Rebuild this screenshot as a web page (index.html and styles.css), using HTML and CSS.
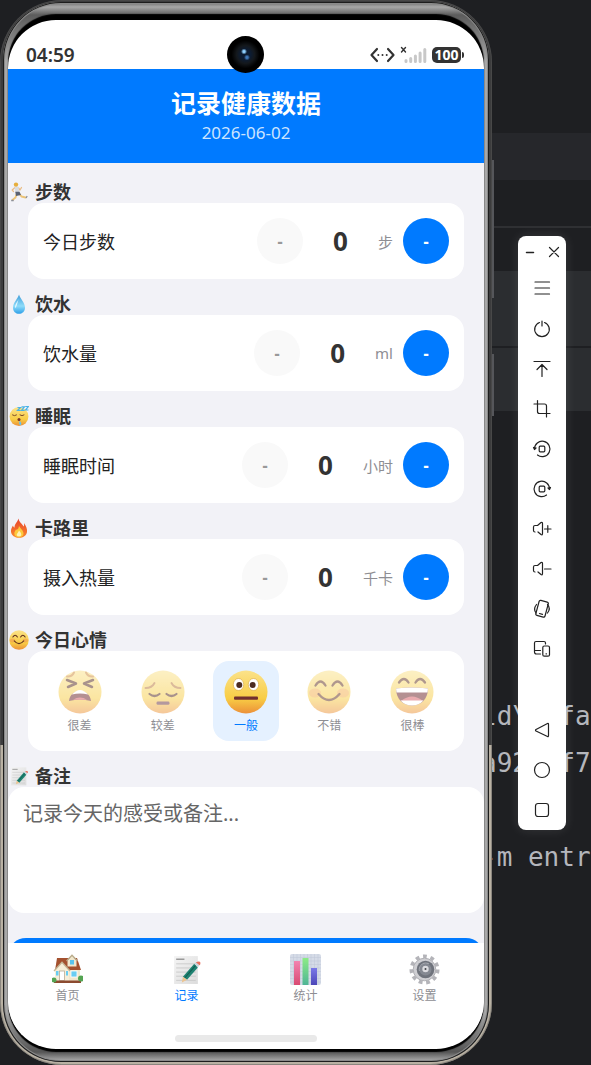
FILE: index.html
```html
<!DOCTYPE html>
<html lang="zh-CN">
<head>
    <meta charset="UTF-8">
    <meta name="viewport" content="width=device-width, initial-scale=1.0">
    <title>记录健康数据</title>
    <link rel="stylesheet" href="styles.css">
</head>
<body>
    <!-- Shared icons -->
    <svg class="sprite" aria-hidden="true">
        <defs>
            <linearGradient id="gFace" x1="0" y1="0" x2="0" y2="1">
                <stop offset="0" stop-color="#fbe28a"/>
                <stop offset="0.65" stop-color="#f8cd45"/>
                <stop offset="1" stop-color="#ec9038"/>
            </linearGradient>
            <linearGradient id="gDrop" x1="0" y1="0" x2="0" y2="1">
                <stop offset="0" stop-color="#3d9bd8"/>
                <stop offset="0.6" stop-color="#8fdcfa"/>
                <stop offset="1" stop-color="#2d9fe8"/>
            </linearGradient>
            <linearGradient id="gFire" x1="0" y1="0" x2="0" y2="1">
                <stop offset="0" stop-color="#e8432c"/>
                <stop offset="1" stop-color="#f98a2c"/>
            </linearGradient>
            <linearGradient id="gPink" x1="0" y1="0" x2="0" y2="1">
                <stop offset="0" stop-color="#f283b0"/>
                <stop offset="1" stop-color="#d94a72"/>
            </linearGradient>
            <linearGradient id="gGreen" x1="0" y1="0" x2="0" y2="1">
                <stop offset="0" stop-color="#8cec86"/>
                <stop offset="1" stop-color="#4fb596"/>
            </linearGradient>
            <linearGradient id="gViolet" x1="0" y1="0" x2="0" y2="1">
                <stop offset="0" stop-color="#7a79e8"/>
                <stop offset="1" stop-color="#4c46b8"/>
            </linearGradient>
            <linearGradient id="gPaper" x1="0" y1="0" x2="1" y2="1">
                <stop offset="0" stop-color="#f4f4f4"/>
                <stop offset="1" stop-color="#dcdcdc"/>
            </linearGradient>
        </defs>
        <symbol id="e-run" viewBox="0 0 20 20">
            <g fill="none" stroke-linecap="round" stroke-linejoin="round">
                <path d="M6 5.500 L3.200 8 L4.500 9.500" stroke="#e9bd86" stroke-width="1.300"/>
                <path d="M7.500 12.500 L6.500 15.500 L3.500 18" stroke="#ecc478" stroke-width="1.900"/>
                <path d="M10.500 12 L12.500 14.500 L16.500 15.500" stroke="#ecc478" stroke-width="1.900"/>
                <path d="M9.500 6 L11 8 L12.500 5.500" stroke="#e9bd86" stroke-width="1.300"/>
            </g>
            <path d="M5.500 4.800 L9.500 4.800 L10.500 10.500 L6.500 10.500 Z" fill="#d9dce3"/>
            <path d="M6.300 9.800 L10.500 9.800 L12 13 L7 14 Z" fill="#5a6172"/>
            <circle cx="7" cy="2.600" r="2.200" fill="#e7ae3c"/>
            <path d="M2.200 18.500 h2.500 M17 16 l1.200 -1.800" stroke="#8b8f99" stroke-width="1.300"/>
        </symbol>
        <symbol id="e-drop" viewBox="0 0 20 20">
            <path d="M10 0.500 C9 4.500 4 8.500 4 13.500 C4 17.500 6.700 19.800 10 19.800 C13.300 19.800 16 17.500 16 13.500 C16 8.500 11 4.500 10 0.500 Z" fill="url(#gDrop)"/>
            <path d="M10 3.500 C9.500 7 6 9.500 6 13.500 C7 15 8 11 10 3.500 Z" fill="#e2f7ff"/>
        </symbol>
        <symbol id="e-sleep" viewBox="0 0 20 20">
            <circle cx="10" cy="10.500" r="9.400" fill="url(#gFace)"/>
            <g fill="none" stroke="#7a4a28" stroke-width="1" stroke-linecap="round">
                <path d="M3.500 9 Q5.500 10.500 7.500 9"/>
                <path d="M11 9 Q13 10.500 15 9"/>
            </g>
            <circle cx="10" cy="13.500" r="1.500" fill="#7b3528"/>
            <path d="M10.500 15 Q13.500 17 11.500 19.500 Q9.500 18.500 10.500 15 Z" fill="#63c5f4"/>
            <path d="M8.500 1.500 h3 l-3 3 h3 M12.500 0.800 h3 l-3 3.500 h3 M16.500 0.500 h3 l-3 3.500 h3" fill="none" stroke="#4bb3e6" stroke-width="1.200"/>
        </symbol>
        <symbol id="e-fire" viewBox="0 0 20 20">
            <path d="M9.500 0.500 C10 4 13.500 6 14.500 8.500 C15.500 7.500 15 6 15 5 C17 8 18.500 11 18 14 C17.500 17.800 14 19.800 10 19.800 C6 19.800 2.300 17.500 2 13.500 C1.800 11 3 9 4 7.500 C4.300 9 5 9.500 5.500 9.500 C5.500 6 8.500 4 9.500 0.500 Z" fill="url(#gFire)"/>
            <path d="M10 7.500 C10.500 10 14.500 12 14.500 15.500 C14.500 18 12.500 19.300 10 19.300 C7.500 19.300 5.300 18 5.300 15.500 C5.300 13.500 6.500 12.500 7 11.500 C8.500 12.500 10 10 10 7.500 Z" fill="#fdc93c"/>
            <path d="M10 12.500 C11 14 12.500 15 12.300 17 C12 18.800 8 18.800 7.700 17 C7.600 15.500 9.500 14.500 10 12.500 Z" fill="#fff3b8"/>
        </symbol>
        <symbol id="e-awful" viewBox="0 0 44 44">
            <circle cx="22" cy="22" r="21.500" fill="url(#gFace)"/>
            <g fill="none" stroke-linecap="round" stroke-linejoin="round">
                <path d="M9 6.500 Q14 7 16 2.500 M35 6.500 Q30 7 28 2.500" stroke="#cf8a3c" stroke-width="2"/>
                <path d="M9 10 L18 13.500 L10 17 M35 10 L26 13.500 L34 17" stroke="#53281c" stroke-width="2.500"/>
            </g>
            <path d="M11 31 C12 18 32 18 33 31 Q22 28 11 31 Z" fill="#6b2328"/>
            <path d="M14 24.500 Q22 15.500 30 24.500 Q22 22.500 14 24.500 Z" fill="#fff"/>
            <path d="M15 29.800 Q22 25 29 29.800 Z" fill="#d65a62"/>
        </symbol>
        <symbol id="e-bad" viewBox="0 0 44 44">
            <circle cx="22" cy="22" r="21.500" fill="url(#gFace)"/>
            <g fill="none" stroke-linecap="round">
                <path d="M4.500 18 Q11 18 13.500 13 M39.500 18 Q33 18 30.500 13" stroke="#b97739" stroke-width="1.900"/>
                <path d="M8.500 24 Q13.500 28 18.500 24 M25.500 24 Q30.500 28 35.500 24" stroke="#53281c" stroke-width="2.200"/>
            </g>
            <rect x="15.500" y="31.500" width="13" height="3.300" rx="1.400" fill="#6b3440"/>
        </symbol>
        <symbol id="e-normal" viewBox="0 0 44 44">
            <circle cx="22" cy="22" r="21.500" fill="url(#gFace)"/>
            <ellipse cx="14.500" cy="14.500" rx="5.200" ry="6" fill="#fff" stroke="#d9a23a" stroke-width="0.600"/>
            <ellipse cx="29.500" cy="14.500" rx="5.200" ry="6" fill="#fff" stroke="#d9a23a" stroke-width="0.600"/>
            <circle cx="15.300" cy="15" r="3" fill="#4c2b20"/>
            <circle cx="28.700" cy="15" r="3" fill="#4c2b20"/>
            <rect x="10" y="26.500" width="24" height="3.200" rx="1" fill="#71302f"/>
        </symbol>
        <symbol id="e-good" viewBox="0 0 44 44">
            <circle cx="22" cy="22" r="21.500" fill="url(#gFace)"/>
            <ellipse cx="8" cy="23" rx="6" ry="4.500" fill="#f0874a" opacity="0.450"/>
            <ellipse cx="36" cy="23" rx="6" ry="4.500" fill="#f0874a" opacity="0.450"/>
            <g fill="none" stroke="#62321f" stroke-width="2.300" stroke-linecap="round">
                <path d="M8.500 15.500 Q13.500 7.500 18.500 15.500 M25.500 15.500 Q30.500 7.500 35.500 15.500"/>
                <path d="M11.500 24 Q22 36 32.500 24"/>
            </g>
        </symbol>
        <symbol id="e-great" viewBox="0 0 44 44">
            <circle cx="22" cy="22" r="21.500" fill="url(#gFace)"/>
            <path d="M9 12.500 Q14 5.500 18.500 12.500 M25.500 12.500 Q30 5.500 35 12.500" fill="none" stroke="#62321f" stroke-width="2.300" stroke-linecap="round"/>
            <path d="M6 18.500 Q22 16.500 38 18.500 C38 29 31 35.500 22 35.500 C13 35.500 6 29 6 18.500 Z" fill="#6b2328"/>
            <path d="M6 18.500 Q22 16.500 38 18.500 L37.500 22.500 H6.500 Z" fill="#fff"/>
            <path d="M11 31 Q22 22 33 31 Z" fill="#d65a62"/>
            <path d="M10.500 30.500 H33.500 Q29 35.500 22 35.500 Q15 35.500 10.500 30.500 Z" fill="#fff"/>
        </symbol>
        <symbol id="e-memo" viewBox="0 0 30 30">
            <rect x="3" y="2" width="23" height="27" fill="url(#gPaper)"/>
            <path d="M5 5 h8" stroke="#9a9a9a" stroke-width="1.400"/>
            <path d="M5 9.500 h19 M5 13.500 h19 M5 17.500 h19 M5 21.500 h19 M5 25.500 h19" stroke="#c6c6c6" stroke-width="0.800"/>
            <path d="M22.500 9.500 L26 13 L15.500 25 L11.500 22 Z" fill="#1f8271"/>
            <path d="M23.800 11 L13.500 23" stroke="#115c50" stroke-width="1"/>
            <path d="M11.500 22 L15.500 25 L10.500 27.500 Z" fill="#edc48f"/>
            <path d="M22.500 9.500 L24 8 L27.500 11 L26 13 Z" fill="#c9d5dc"/>
            <path d="M24 8 Q28 6.500 28.500 8.500 Q28.500 10.500 27.500 11 Z" fill="#e8705f"/>
        </symbol>
        <symbol id="e-house" viewBox="0 0 31 30">
            <path d="M4 15 H28 V27 H4 Z" fill="#f0e7cd"/>
            <path d="M5 3.500 H25 L29 15.500 H17 L10 8 L3 16 Z" fill="#a4512f"/>
            <path d="M15.500 6 L20 1 L24.500 6 V12 H15.500 Z" fill="#f0e7cd"/>
            <path d="M14.500 6.500 L20 0.800 L25.500 6.500" fill="none" stroke="#b9ab8b" stroke-width="1.300"/>
            <rect x="18" y="5.500" width="4" height="4.500" fill="#59c4ee"/>
            <path d="M3 16 L10 8.500 L17 16 V27 H3 Z" fill="#f6eed8"/>
            <path d="M2 16.500 L10 7.800 L18 16.500" fill="none" stroke="#c4b594" stroke-width="1.300"/>
            <rect x="7.500" y="16.500" width="5" height="9.500" fill="#fff" stroke="#b7ab95" stroke-width="0.800"/>
            <rect x="19" y="16.500" width="6" height="6" fill="#69cdf2" stroke="#fff" stroke-width="0.800"/>
            <rect x="4" y="16.500" width="2.500" height="4.500" fill="#69cdf2"/>
            <rect x="14" y="16.500" width="2" height="4.500" fill="#69cdf2"/>
            <rect x="2" y="26" width="27" height="2.500" fill="#8c4b30"/>
            <circle cx="2" cy="25.500" r="2.500" fill="#54a453"/>
            <circle cx="29" cy="24" r="3" fill="#54a453"/>
        </symbol>
        <symbol id="e-chart" viewBox="0 0 31 31">
            <rect width="31" height="31" rx="2" fill="#d5dbe7"/>
            <path d="M3.500 0 V31 M7 0 V31 M10.500 0 V31 M14 0 V31 M17.500 0 V31 M21 0 V31 M24.500 0 V31 M28 0 V31 M0 3.500 H31 M0 7 H31 M0 10.500 H31 M0 14 H31 M0 17.500 H31 M0 21 H31 M0 24.500 H31 M0 28 H31" stroke="#bfc7d6" stroke-width="0.500"/>
            <rect x="4" y="7" width="6" height="24" fill="url(#gPink)"/>
            <rect x="12.500" y="4" width="6" height="27" fill="url(#gGreen)"/>
            <rect x="21" y="14" width="6" height="17" fill="url(#gViolet)"/>
        </symbol>
        <symbol id="e-gear" viewBox="0 0 31 31">
            <circle cx="15.500" cy="15.500" r="13.200" fill="none" stroke="#b4b4b9" stroke-width="3.600" stroke-dasharray="3.800 3.740"/>
            <circle cx="15.500" cy="15.500" r="11.300" fill="#cfcfd3" stroke="#a3a3a8" stroke-width="0.800"/>
            <circle cx="16.500" cy="15.500" r="8.800" fill="#6f737c"/>
            <path d="M10.500 17 A6.500 6.500 0 0 1 20 10" fill="none" stroke="#a5a8af" stroke-width="1.200"/>
            <circle cx="16.500" cy="15.500" r="6" fill="#858992"/>
            <circle cx="16.500" cy="15" r="3.200" fill="#dcdce0"/>
            <circle cx="16.500" cy="15" r="1" fill="#44464c"/>
        </symbol>
    </svg>

    <!-- Terminal behind the device -->
    <pre class="terminal">ld\  fa
a92  f7

-m entr</pre>

    <div class="device">
        <div class="bezel">
            <div class="screen">
                <div class="status-bar">
                    <span class="clock">04:59</span>
                    <span class="camera"></span>
                    <div class="status-icons">
                        <svg width="25" height="16" viewBox="0 0 25 16" fill="none" stroke="#333" stroke-width="2.200" stroke-linecap="round" stroke-linejoin="round">
                            <path d="M7 2 L1.500 8 L7 14 M18 2 L23.500 8 L18 14"/>
                            <path d="M8.300 8 h0.010 M12.500 8 h0.010 M16.700 8 h0.010" stroke-width="2"/>
                        </svg>
                        <svg width="27" height="18" viewBox="0 0 27 18" fill="none" stroke="#c8c8c8" stroke-width="3" stroke-linecap="round">
                            <path d="M6 15.500 V14.500 M10.700 15.500 V12.500 M15.400 15.500 V10 M20.100 15.500 V7 M24.800 15.500 V3.500"/>
                            <path d="M1.500 1.500 L5.500 6 M5.500 1.500 L1.500 6" stroke="#333" stroke-width="1.400"/>
                        </svg>
                        <span class="battery">100</span>
                    </div>
                </div>

                <header class="header">
                    <h1>记录健康数据</h1>
                    <p>2026-06-02</p>
                </header>

                <main class="content">
                    <h2><svg class="emoji"><use href="#e-run"/></svg>步数</h2>
                    <div class="card">
                        <span class="label">今日步数</span>
                        <button class="round minus" aria-label="减少步数">-</button>
                        <span class="value">0</span>
                        <span class="unit">步</span>
                        <button class="round plus" aria-label="增加步数">-</button>
                    </div>

                    <h2><svg class="emoji"><use href="#e-drop"/></svg>饮水</h2>
                    <div class="card">
                        <span class="label">饮水量</span>
                        <button class="round minus" aria-label="减少饮水">-</button>
                        <span class="value">0</span>
                        <span class="unit">ml</span>
                        <button class="round plus" aria-label="增加饮水">-</button>
                    </div>

                    <h2><svg class="emoji"><use href="#e-sleep"/></svg>睡眠</h2>
                    <div class="card">
                        <span class="label">睡眠时间</span>
                        <button class="round minus" aria-label="减少睡眠">-</button>
                        <span class="value">0</span>
                        <span class="unit">小时</span>
                        <button class="round plus" aria-label="增加睡眠">-</button>
                    </div>

                    <h2><svg class="emoji"><use href="#e-fire"/></svg>卡路里</h2>
                    <div class="card">
                        <span class="label">摄入热量</span>
                        <button class="round minus" aria-label="减少热量">-</button>
                        <span class="value">0</span>
                        <span class="unit">千卡</span>
                        <button class="round plus" aria-label="增加热量">-</button>
                    </div>

                    <h2><svg class="emoji"><use href="#e-good"/></svg>今日心情</h2>
                    <div class="card moods">
                        <button class="mood"><svg><use href="#e-awful"/></svg><span>很差</span></button>
                        <button class="mood"><svg><use href="#e-bad"/></svg><span>较差</span></button>
                        <button class="mood selected"><svg><use href="#e-normal"/></svg><span>一般</span></button>
                        <button class="mood"><svg><use href="#e-good"/></svg><span>不错</span></button>
                        <button class="mood"><svg><use href="#e-great"/></svg><span>很棒</span></button>
                    </div>

                    <h2><svg class="emoji"><use href="#e-memo"/></svg><label for="note">备注</label></h2>
                    <textarea id="note" placeholder="记录今天的感受或备注..."></textarea>

                    <button class="save" aria-label="保存"></button>
                </main>

                <nav class="tabs">
                    <a href="#home"><svg><use href="#e-house"/></svg>首页</a>
                    <a href="#record" class="active"><svg><use href="#e-memo"/></svg>记录</a>
                    <a href="#stats"><svg><use href="#e-chart"/></svg>统计</a>
                    <a href="#settings"><svg><use href="#e-gear"/></svg>设置</a>
                </nav>
                <div class="home-bar"></div>
            </div>
        </div>
    </div>

    <!-- Emulator toolbar -->
    <aside class="toolbar">
        <div class="window-buttons">
            <button aria-label="最小化"><svg viewBox="0 0 12 12"><path d="M2.500 6.500 h7" stroke-width="1.500"/></svg></button>
            <button aria-label="关闭"><svg viewBox="0 0 12 12"><path d="M1.500 1.500 L10.500 10.500 M10.500 1.500 L1.500 10.500"/></svg></button>
        </div>
        <button aria-label="菜单"><svg viewBox="0 0 20 20"><path d="M3 4 H17.500 M3 10 H17.500 M3 16 H17.500"/></svg></button>
        <button aria-label="电源"><svg viewBox="0 0 20 20"><path d="M7.500 4.500 A7.300 7.300 0 1 0 12.500 4.500 M10 3 V8"/></svg></button>
        <button aria-label="上传"><svg viewBox="0 0 20 20"><path d="M2 3.500 H18 M10 18.500 V6.500 M5 11.500 L10 6.500 L15 11.500"/></svg></button>
        <button aria-label="截图"><svg viewBox="0 0 20 20"><path d="M5.500 2.500 V13.500 Q5.500 15.500 7.500 15.500 H18 M2 6 H12.500 Q14.500 6 14.500 8 V19"/></svg></button>
        <button aria-label="向左旋转"><svg viewBox="0 0 20 20"><path d="M2.500 11 A7.700 7.700 0 1 1 5.500 17 M1.500 9.500 L2.500 11.500 L4 10"/><rect x="7.200" y="8.200" width="5.600" height="5.600" rx="1"/></svg></button>
        <button aria-label="向右旋转"><svg viewBox="0 0 20 20"><path d="M17.500 11 A7.700 7.700 0 1 0 14.500 17 M18.500 9.500 L17.500 11.500 L16 10"/><rect x="7.200" y="8.200" width="5.600" height="5.600" rx="1"/></svg></button>
        <button aria-label="音量加"><svg viewBox="0 0 20 20"><path d="M3 14 Q1.500 14 1.500 12.500 V9 Q1.500 7.500 3 7.500 H5.500 L9 4.500 Q10.500 4 10.500 5.500 V15.500 Q10.500 17.500 9 16.500 L6 14 M12.500 11 H19 M15.800 7.700 V14.300"/></svg></button>
        <button aria-label="音量减"><svg viewBox="0 0 20 20"><path d="M3 14 Q1.500 14 1.500 12.500 V9 Q1.500 7.500 3 7.500 H5.500 L9 4.500 Q10.500 4 10.500 5.500 V15.500 Q10.500 17.500 9 16.500 L6 14 M12.500 11 H19"/></svg></button>
        <button aria-label="摇一摇"><svg viewBox="0 0 20 20"><rect x="5.300" y="3" width="9.500" height="15.500" rx="1.500" transform="rotate(15 10 10.750)"/><path d="M7.500 15.500 L10.500 16.300 M4.500 6.500 Q1 11 4 15 M15.500 6.500 Q19 10.500 15.500 15"/></svg></button>
        <button aria-label="多屏"><svg viewBox="0 0 20 20"><path d="M8.500 16 H4.500 Q2.500 16 2.500 14 V5 Q2.500 3.500 4 3.500 H12 Q13.500 3.500 13.500 5 V6 M2.500 12.500 H8.500"/><rect x="10.800" y="8" width="6.700" height="10.200" rx="1.500"/><path d="M14 15.800 h0.500"/></svg></button>
        <div class="system-keys">
            <button aria-label="返回"><svg viewBox="0 0 20 20"><path d="M15.500 3.500 Q16.500 3 16.500 4.500 V15.500 Q16.500 17 15.500 16.500 L4 11 Q3 10.200 4 9.500 Z"/></svg></button>
            <button aria-label="主页"><svg viewBox="0 0 20 20"><circle cx="10" cy="10" r="7.500"/></svg></button>
            <button aria-label="最近任务"><svg viewBox="0 0 20 20"><rect x="3.500" y="3.500" width="13" height="13" rx="2.500"/></svg></button>
        </div>
    </aside>
</body>
</html>
```

FILE: styles.css
```css
* {
    box-sizing: border-box;
}
body {
    position: relative;
    display: flex;
    gap: 26px;
    height: 100vh;
    margin: 0;
    padding-right: 25px;
    overflow: hidden;
    font-family: "Noto Sans", "Noto Sans CJK SC", sans-serif;
    color: #222;
    background: linear-gradient(#1e1f22 133px, #26272b 133px 180px, #1e1f22 180px 226px, #2f3033 226px 228px, #1e1f22 228px 271px, #2b2d30 271px 346px, #1e1f22 346px 348px, #2b2d30 348px 411px, #1e1f22 411px);
}
h1, h2, p {
    margin: 0;
}
button {
    padding: 0;
    border: none;
    background: none;
    font-family: inherit;
    cursor: pointer;
}
.sprite {
    position: absolute;
    width: 0;
    height: 0;
}
.terminal {
    position: absolute;
    top: 693px;
    left: 481px;
    margin: 0;
    font-family: "DejaVu Sans Mono", monospace;
    font-size: 26px;
    line-height: 47px;
    color: #b4b6bc;
}

/* Device frame */
.device {
    position: relative;
    flex: 1;
    min-width: 0;
    padding: 2px 3px 3px;
    border-radius: 62px;
    background: linear-gradient(#3c3c3d 70%, #b9b1a3 70%);
    box-shadow: inset 0 0 0 1px #55555577;
}
.device::before,
.device::after {
    content: "";
    position: absolute;
    left: 100%;
    width: 2px;
    background: #55565a;
}
.device::before {
    top: 160px;
    height: 138px;
}
.device::after {
    top: 354px;
    height: 62px;
}
.bezel {
    height: 100%;
    padding: 18px 5px 13px;
    border-radius: 58px;
    background: linear-gradient(#6a6a6a, #a8a8a8 5px, #5c5c5c 13px, #a8a8a8 60px calc(100% - 50px), #555 calc(100% - 10px), #b5b5b5);
    box-shadow: inset 0 0 0 1px #1d1d1d, inset 0 0 0 2px #8a8a8a;
}
.screen {
    position: relative;
    display: flex;
    flex-direction: column;
    height: 100%;
    overflow: hidden;
    border-radius: 48px;
    background: #fff;
    box-shadow: 0 -6px 1px #000, 0 3px 1px #000;
}

/* Status bar */
.status-bar {
    position: relative;
    z-index: 1;
    display: flex;
    align-items: center;
    justify-content: space-between;
    height: 49px;
    padding: 20px 20px 0 18px;
}
.clock {
    font-size: 19px;
    font-weight: 600;
    color: #333;
}
.camera {
    position: absolute;
    top: 16px;
    left: 50%;
    width: 37px;
    height: 37px;
    margin-left: -19px;
    border-radius: 50%;
    background: radial-gradient(circle at 46% 42%, #8fd0ff 1px, transparent 3px), radial-gradient(circle at 54% 58%, #3f77b8 1px, transparent 3px), radial-gradient(circle, #0c1c33 5px, #14181c 9px, #000 14px);
}
.status-icons {
    display: flex;
    align-items: center;
    gap: 5px;
}
.battery {
    position: relative;
    width: 29px;
    height: 16px;
    margin-right: 3px;
    border-radius: 5px;
    font-size: 14px;
    font-weight: 700;
    line-height: 16px;
    text-align: center;
    color: #fff;
    background: #333;
}
.battery::after {
    content: "";
    position: absolute;
    top: 5px;
    right: -3px;
    width: 2px;
    height: 6px;
    border-radius: 0 2px 2px 0;
    background: #333;
}

/* Page */
.header {
    height: 94px;
    padding-top: 17px;
    text-align: center;
    color: #fff;
    background: #007aff;
}
.header h1 {
    font-size: 25px;
    line-height: 34px;
}
.header p {
    font-size: 17px;
    line-height: 26px;
    color: #cce4ff;
}
.content {
    flex: 1;
    min-height: 0;
    padding-top: 4px;
    overflow: hidden;
    background: #f2f2f7;
}
.content h2 {
    display: flex;
    align-items: center;
    gap: 6px;
    height: 36px;
    padding-top: 14px;
    padding-left: 1px;
    font-size: 18px;
    line-height: 22px;
    color: #333;
}
.emoji {
    width: 20px;
    height: 20px;
}
.card {
    display: flex;
    align-items: center;
    min-height: 76px;
    margin: 0 20px;
    padding: 0 15px;
    border-radius: 16px;
    background: #fff;
}
.label {
    flex: 1;
    font-size: 18px;
}
.round {
    width: 46px;
    height: 46px;
    border-radius: 50%;
    font-size: 16px;
    font-weight: 800;
}
.minus {
    color: #999;
    background: #f9f9f9;
}
.plus {
    margin-left: 10px;
    color: #fff;
    background: #007aff;
}
.value {
    width: 75px;
    font-size: 26px;
    font-weight: 700;
    text-align: center;
    color: #333;
}
.unit {
    font-size: 15px;
    color: #8e8e93;
}
.moods {
    display: grid;
    grid-template-columns: repeat(5, 1fr);
    justify-items: center;
    padding: 10px;
}
.mood {
    display: flex;
    flex-direction: column;
    align-items: center;
    gap: 3px;
    width: 66px;
    height: 80px;
    padding-top: 9px;
    border-radius: 16px;
    font-size: 12px;
    line-height: 18px;
    color: #8e8e93;
}
.mood svg {
    width: 44px;
    height: 44px;
    opacity: 0.5;
}
.mood.selected {
    color: #007aff;
    background: #e5f1ff;
}
.mood.selected svg {
    opacity: 1;
}
textarea {
    display: block;
    width: 100%;
    height: 126px;
    padding: 12px 15px;
    border: none;
    border-radius: 16px;
    font-family: inherit;
    font-size: 20px;
    line-height: 30px;
    background: #fff;
    resize: none;
}
textarea::placeholder {
    color: #666;
}
.save {
    display: block;
    width: 100%;
    height: 50px;
    margin-top: 25px;
    border-radius: 18px;
    background: #007aff;
}

/* Tab bar */
.tabs {
    display: grid;
    grid-template-columns: repeat(4, 1fr);
    height: 92px;
    padding-top: 11px;
    background: #fff;
}
.tabs a {
    display: flex;
    flex-direction: column;
    align-items: center;
    gap: 2px;
    font-size: 12px;
    line-height: 18px;
    color: #8e8e93;
    text-decoration: none;
}
.tabs svg {
    width: 31px;
    height: 31px;
}
.tabs .active {
    color: #007aff;
}
.home-bar {
    width: 30%;
    height: 7px;
    margin: 0 auto 7px;
    border-radius: 4px;
    background: #e9e9e9;
}

/* Emulator toolbar */
.toolbar {
    position: relative;
    display: flex;
    flex-direction: column;
    align-self: flex-start;
    width: 48px;
    margin-top: 236px;
    border-radius: 8px;
    background: #fff;
    box-shadow: 0 0 12px #ffffff1c;
}
.toolbar button {
    display: flex;
    align-items: center;
    justify-content: center;
    width: 100%;
    height: 40px;
}
.toolbar svg {
    width: 20px;
    height: 20px;
    fill: none;
    stroke: #222;
    stroke-width: 1.2;
    stroke-linecap: round;
    stroke-linejoin: round;
}
.window-buttons {
    display: flex;
}
.toolbar .window-buttons button {
    height: 32px;
}
.toolbar .window-buttons svg {
    width: 12px;
    height: 12px;
}
.system-keys {
    margin-top: 42px;
}
```
